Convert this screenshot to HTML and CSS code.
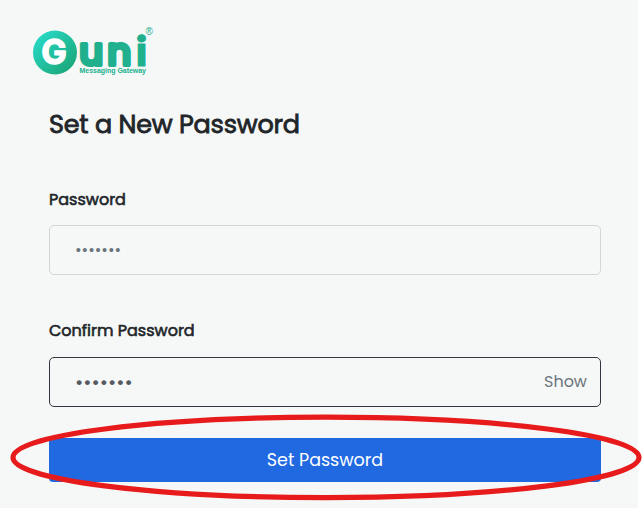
FILE: index.html
```html
<!DOCTYPE html>
<html lang="en">
<head>
<meta charset="utf-8">
<title>Set a New Password</title>
<link rel="stylesheet" href="styles.css">
</head>
<body>
<main class="panel">
  <svg class="logo" width="124" height="52" viewBox="0 0 124 52" role="img" aria-label="Guni Messaging Gateway">
    <defs>
      <linearGradient id="disc" x1="0" y1="0" x2="1" y2="1">
        <stop offset=".12" stop-color="#27d8c4"/>
        <stop offset=".9" stop-color="#1ba679"/>
      </linearGradient>
    </defs>
    <circle cx="22" cy="27.5" r="22" fill="url(#disc)"/>
    <text class="logo-g" x="8.2" y="39.3">G</text>
    <text class="logo-uni" x="46.3 74.2 102.8" y="39.6">un<tspan class="logo-i" y="41">i</tspan></text>
    <text class="logo-tag" x="46.5" y="48.3" textLength="66.5" lengthAdjust="spacingAndGlyphs">Messaging Gateway</text>
    <text class="logo-reg" x="112.6" y="10.2">®</text>
  </svg>
  <form class="form">
    <h1 class="title">Set a New Password</h1>
    <label class="label">Password</label>
    <div class="field"><span class="dots">•••••••</span></div>
    <label class="label label-confirm">Confirm Password</label>
    <div class="field field-active"><span class="dots dots-large">•••••••</span><span class="show">Show</span></div>
    <button class="submit" type="button">Set Password</button>
  </form>
</main>
<svg class="highlight" width="642" height="508" viewBox="0 0 642 508" aria-hidden="true">
  <ellipse cx="326" cy="457.4" rx="313" ry="40.2"/>
</svg>
</body>
</html>
```
FILE: styles.css
```css
* { box-sizing: border-box; }
body {
  margin: 0;
  overflow: hidden;
  background: #fff;
  color: #212529;
  font-family: Poppins, Inter, sans-serif;
}
.panel {
  width: 638px;
  height: 508px;
  padding: 25px 37px 0 33px;
  background: #f6f8f7;
}
.logo { display: block; overflow: visible; }
.logo text { fill: #20b08e; }
.logo .logo-g { font: 700 34px Inter, sans-serif; fill: #fff; stroke: #fff; stroke-width: 1.4; stroke-linejoin: round; }
.logo .logo-uni { font: 500 37px Poppins, sans-serif; stroke: #20b08e; stroke-width: 4; stroke-linejoin: round; }
.logo .logo-i { font-weight: 700; font-size: 39px; stroke-width: 1; }
.logo .logo-tag { font: 700 6.8px "Liberation Sans", sans-serif; }
.logo .logo-reg { font: 400 10px "Liberation Sans", sans-serif; }
.form { display: flex; flex-direction: column; padding-left: 16px; }
.title {
  margin: 28px 0 1px;
  font-size: 25.5px;
  letter-spacing: -.23px;
  line-height: 38px;
  font-weight: 400;
  white-space: nowrap;
  -webkit-text-stroke: .8px #212529;
}
.label {
  margin-top: 44px;
  font-size: 16px;
  line-height: 24px;
  font-weight: 400;
  -webkit-text-stroke: .6px #212529;
}
.label-confirm { margin-top: 44px; }
.field {
  display: flex;
  align-items: center;
  justify-content: space-between;
  width: 552px;
  height: 50px;
  margin-top: 13px;
  padding: 0 13px 0 26px;
  border: 1px solid #d3d6d5;
  border-radius: 5px;
}
.field-active { margin-top: 14px; border-color: #34353f; }
.dots { color: #6c757d; font-size: 16px; line-height: 24px; margin-left: -1px; }
.dots-large { color: #555b60; font-size: 20px; }
.show { color: #6c757d; font-size: 16px; line-height: 24px; }
.submit {
  width: 552px;
  height: 44px;
  margin-top: 31px;
  padding: 0;
  border: 0;
  border-radius: 0 0 4px 4px;
  background: #2169e1;
  color: #fff;
  font: 400 17.5px Poppins, Inter, sans-serif;
}
.highlight { position: absolute; top: 0; left: 0; pointer-events: none; }
.highlight ellipse { fill: none; stroke: #e71b1c; stroke-width: 5.2; }
```
